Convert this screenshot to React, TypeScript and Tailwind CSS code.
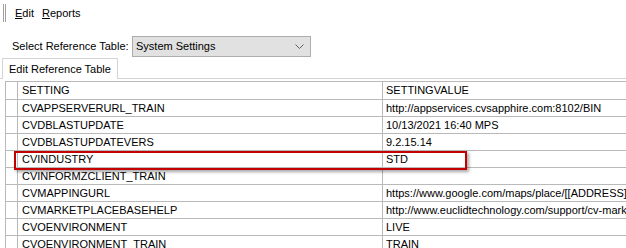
import React from 'react';

const rows: [string, string][] = [
    ['CVAPPSERVERURL_TRAIN', 'http://appservices.cvsapphire.com:8102/BIN'],
    ['CVDBLASTUPDATE', '10/13/2021 16:40 MPS'],
    ['CVDBLASTUPDATEVERS', '9.2.15.14'],
    ['CVINDUSTRY', 'STD'],
    ['CVINFORMZCLIENT_TRAIN', ''],
    ['CVMAPPINGURL', 'https://www.google.com/maps/place/[[ADDRESS]]'],
    ['CVMARKETPLACEBASEHELP', 'http://www.euclidtechnology.com/support/cv-marketplace'],
    ['CVOENVIRONMENT', 'LIVE'],
    ['CVOENVIRONMENT_TRAIN', 'TRAIN'],
];

function GridRow({ a, b, header = false }: { a: string; b: string; header?: boolean }) {
    return (
        <div className={`flex ${header ? 'h-[18px]' : 'h-[17px]'} border-b border-[#b9b9b9]`}>
            <div className="w-[12px] shrink-0 border-r border-[#b9b9b9]" />
            <div className="w-[365px] shrink-0 border-r border-[#b9b9b9] pl-[4px] leading-[17px] whitespace-nowrap overflow-hidden">
                {a}
            </div>
            <div className="w-[400px] shrink-0 pl-[3px] leading-[17px] whitespace-nowrap overflow-hidden">
                {b}
            </div>
        </div>
    );
}

export default function App() {
    return (
        <div className="w-[626px] h-[248px] overflow-hidden bg-white text-black text-[11px] font-['Liberation_Sans',Arial,sans-serif]">
            {/* menu strip */}
            <div className="flex items-center h-[26px]">
                <div className="flex gap-[1px] ml-[3px] h-[18px]">
                    <div className="w-[1px] bg-[#a0a0a0]" />
                    <div className="w-[1px] bg-[#a0a0a0]" />
                </div>
                <span className="ml-[9px]"><u>E</u>dit</span>
                <span className="ml-[8px]"><u>R</u>eports</span>
            </div>

            {/* reference table selector */}
            <div className="flex items-center h-[31px] mt-[5px]">
                <span className="ml-[12px] w-[120px]">Select Reference Table:</span>
                <div className="flex items-center justify-between w-[179px] h-[21px] border border-[#adadad] bg-[#e1e1e1] pl-[3px] pr-[6px]">
                    <span>System Settings</span>
                    <svg width="9" height="6" viewBox="0 0 9 6" fill="none" stroke="#606060" strokeWidth="1">
                        <path d="M0.5 0.5 L4.5 4.5 L8.5 0.5" />
                    </svg>
                </div>
            </div>

            {/* tab strip */}
            <div className="flex items-end h-[17px] pl-[2px] border-b border-[#d4d4d4]">
                <div className="h-[21px] px-[6px] border border-b-0 border-[#d4d4d4] bg-white leading-[20px] mb-[-1px]">
                    Edit Reference Table
                </div>
            </div>

            {/* grid */}
            <div className="relative mt-[2px] ml-[5px] border-t border-l border-[#b9b9b9]">
                <GridRow a="SETTING" b="SETTINGVALUE" header />
                {rows.map(([a, b]) => (
                    <GridRow key={a} a={a} b={b} />
                ))}
                <div className="absolute left-[8px] top-[69px] w-[453px] h-[19px] border-2 border-[#c40000] shadow-[2px_2px_3px_rgba(0,0,0,0.35)]" />
            </div>
        </div>
    );
}
